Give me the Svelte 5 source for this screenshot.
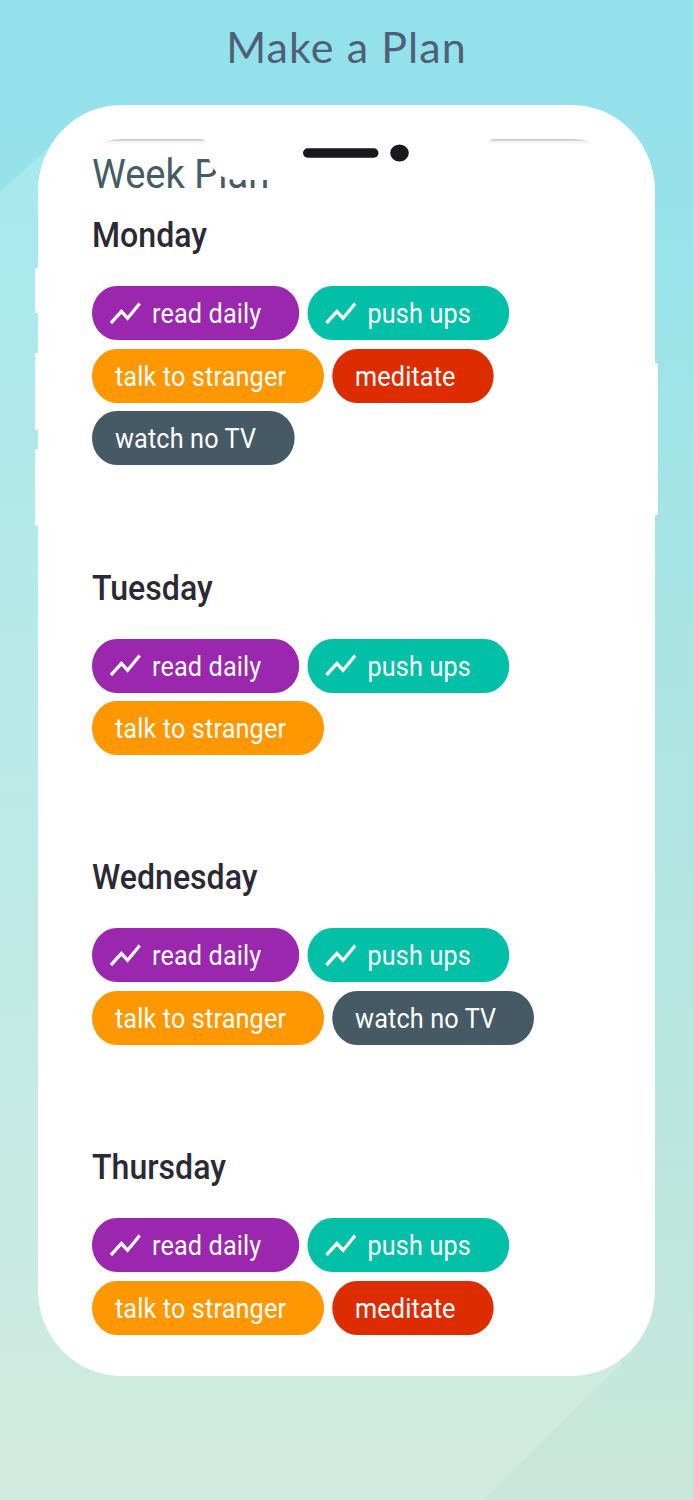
<script>
	const habits = {
		read: { label: "read daily", color: "purple", chart: true },
		push: { label: "push ups", color: "teal", chart: true },
		talk: { label: "talk to stranger", color: "orange" },
		meditate: { label: "meditate", color: "red" },
		tv: { label: "watch no TV", color: "slate" }
	};

	let days = [
		{ name: "Monday", items: ["read", "push", "talk", "meditate", "tv"] },
		{ name: "Tuesday", items: ["read", "push", "talk"] },
		{ name: "Wednesday", items: ["read", "push", "talk", "tv"] },
		{ name: "Thursday", items: ["read", "push", "talk", "meditate"] }
	];
</script>

<main>
	<svg class="backdrop" viewBox="0 0 693 1500" aria-hidden="true">
		<defs>
			<linearGradient id="light" gradientUnits="userSpaceOnUse" x1="0" y1="140" x2="0" y2="1500">
				<stop offset="0" stop-color="#a7e8ef" />
				<stop offset="0.3" stop-color="#b3e9e9" />
				<stop offset="1" stop-color="#d2ebdf" />
			</linearGradient>
		</defs>
		<path fill="url(#light)" d="M0 192L52 145L622 1364L482 1500H0z" />
	</svg>

	<h1>Make a Plan</h1>

	<div class="phone">
		<i class="key mute"></i>
		<i class="key up"></i>
		<i class="key down"></i>
		<i class="key power"></i>

		<div class="screen">
			<h2>Week Plan</h2>
			{#each days as day (day.name)}
				<section>
					<h3>{day.name}</h3>
					<ul>
						{#each day.items as id (id)}
							<li class={habits[id].color} class:chart={habits[id].chart}>
								{#if habits[id].chart}
									<svg viewBox="0 0 24 24" aria-hidden="true">
										<path d="M3.5 18.49l6-6.01 4 4L22 6.92l-1.41-1.41-7.09 7.97-4-4L2 16.99z" />
									</svg>
								{/if}
								<span>{habits[id].label}</span>
							</li>
						{/each}
					</ul>
				</section>
			{/each}
		</div>

		<svg class="notch" viewBox="38 104 618 90" aria-hidden="true">
			<defs>
				<linearGradient id="shade" x1="0" y1="0" x2="0" y2="1">
					<stop offset="0" stop-color="#c8cacb" />
					<stop offset="0.25" stop-color="#d5d6d6" />
					<stop offset="0.4" stop-color="#f2f2f2" />
					<stop offset="1" stop-color="#fff" />
				</linearGradient>
			</defs>
			<path fill="url(#shade)" d="M97 145Q108 139 121 139H201Q205 139 207 145z" />
			<path fill="url(#shade)" d="M487 145Q489 139 494 139H573Q586 139 597 145z" />
			<path fill="#fff" d="M206 146C208 152 208 158 210 162C214 172 222 180 239 180H455C476 180 487 164 487 146z" />
			<rect x="303" y="148.3" width="75.5" height="9.4" rx="4.7" fill="#19181f" />
			<ellipse cx="399.5" cy="153" rx="9.3" ry="8.6" fill="#19181f" />
		</svg>
	</div>
</main>

<style>
	:global(body) {
		margin: 0;
	}
	main {
		position: relative;
		width: 693px;
		height: 1500px;
		overflow: hidden;
		background: linear-gradient(#92e1ec, #9ae3e9 20%, #a7e4e5 36%, #c2e7dc 88%, #cae7da);
		font-family: Roboto, "Liberation Sans", sans-serif;
	}
	h1, h2, h3, ul {
		margin: 0;
		padding: 0;
		white-space: nowrap;
	}
	.backdrop {
		position: absolute;
		inset: 0;
		width: 693px;
		height: 1500px;
	}
	h1 {
		position: relative;
		height: 104.5px;
		line-height: 94px;
		text-align: center;
		font-family: Lato, "Open Sans", sans-serif;
		font-size: 43px;
		font-weight: 400;
		letter-spacing: 1.1px;
		color: #4f6076;
	}
	.phone {
		position: relative;
		box-sizing: border-box;
		width: 617px;
		height: 1271.5px;
		margin-left: 38px;
		padding: 41.5px 0 0 54.4px;
		border-radius: 83px / 86px;
		background: #fff;
	}
	.key {
		position: absolute;
		left: -3px;
		width: 10px;
		border-radius: 2px;
		background: #fff;
	}
	.mute {
		top: 163px;
		height: 45px;
	}
	.up {
		top: 248px;
		height: 77px;
	}
	.down {
		top: 344px;
		height: 77px;
	}
	.power {
		left: auto;
		right: -3px;
		top: 258px;
		height: 152px;
	}
	/* the screen is a little narrower than its natural proportions */
	.screen {
		width: 550px;
		transform: scaleX(0.917);
		transform-origin: 0 0;
	}
	h2 {
		height: 56px;
		line-height: 55px;
		font-size: 41.5px;
		font-weight: 400;
		color: #475b66;
	}
	h3 {
		height: 84px;
		line-height: 68px;
		font-size: 35px;
		font-weight: 500;
		color: #2c2935;
	}
	section {
		margin-bottom: 89.2px;
	}
	ul {
		display: flex;
		flex-wrap: wrap;
		gap: 8.7px;
		list-style: none;
	}
	li {
		display: flex;
		align-items: center;
		box-sizing: border-box;
		height: 54px;
		padding: 0 41.5px 0 25px;
		border-radius: 27px;
		font-size: 27.5px;
		letter-spacing: 0.16px;
		color: #fff;
	}
	li.chart {
		padding-left: 16.3px;
	}
	li span {
		padding-top: 1px;
	}
	li svg {
		width: 40.6px;
		height: 40.6px;
		margin-right: 8.5px;
		fill: #fff;
	}
	.purple {
		background: #9b27ae;
	}
	.teal {
		background: #02c0a7;
	}
	.orange {
		background: #ff9800;
	}
	.red {
		background: #dd2c00;
	}
	.slate {
		background: #465a65;
	}
	.notch {
		position: absolute;
		top: -0.5px;
		left: 0;
		width: 618px;
		height: 90px;
	}
</style>
